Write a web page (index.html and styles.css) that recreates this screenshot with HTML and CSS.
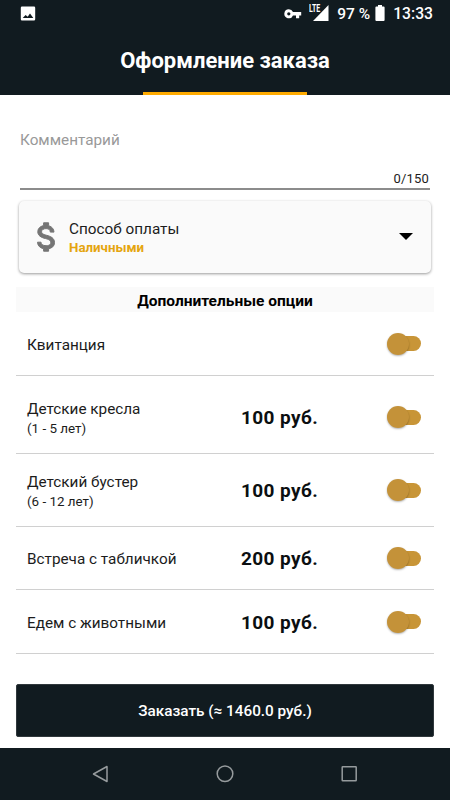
FILE: index.html
```html
<!DOCTYPE html>
<html lang="ru">
  <head>
    <meta charset="UTF-8" />
    <meta name="viewport" content="width=device-width, initial-scale=1.0" />
    <title>Оформление заказа</title>
    <link rel="stylesheet" href="styles.css">
  </head>
  <body>
    <div class="header">
      <div class="status-bar">
        <svg class="icon-image" width="16" height="15" viewBox="0 0 16 15">
          <path fill="#fff" fill-rule="evenodd" d="M2 0.500h12a1.200 1.200 0 0 1 1.200 1.200v11.600a1.200 1.200 0 0 1-1.200 1.200H2a1.200 1.200 0 0 1-1.200-1.200V1.700A1.200 1.200 0 0 1 2 0.500zM2.700 12h10.600L10 7.600 7.700 10.700 5.600 9z"/>
        </svg>
        <div class="status-right">
          <svg class="icon-key" width="18" height="10" viewBox="0 0 18 10">
            <path fill="#fff" fill-rule="evenodd" d="M4.800 0.300a4.500 4.500 0 1 0 4.200 6.200h3v2.700h3.200V6.500h2V3.100H9A4.500 4.500 0 0 0 4.800 0.300zM4.800 3.200a1.650 1.650 0 1 1 0 3.300 1.650 1.650 0 0 1 0-3.300z"/>
          </svg>
          <div class="signal">
            <svg width="16" height="16" viewBox="0 0 16 16"><path fill="#fff" d="M15.500 0v16H0z"/></svg>
            <span class="lte">LTE</span>
          </div>
          <span class="battery-text">97 %</span>
          <svg class="icon-battery" width="10" height="16" viewBox="0 0 10 16">
            <path fill="#fff" d="M3 0h4v1.500h1.600a1 1 0 0 1 1 1V15a1 1 0 0 1-1 1H1.400a1 1 0 0 1-1-1V2.500a1 1 0 0 1 1-1H3z"/>
          </svg>
          <span class="time">13:33</span>
        </div>
      </div>
      <h1>Оформление заказа</h1>
      <div class="tab-line"></div>
    </div>

    <div class="content">
      <!-- Комментарий -->
      <div class="comment">
        <div class="comment-label">Комментарий</div>
        <div class="comment-count">0/150</div>
      </div>

      <!-- Способ оплаты -->
      <div class="payment">
        <svg class="icon-dollar" width="18" height="30" viewBox="0 0 18 30">
          <path fill="#757575" stroke="#757575" stroke-width="1" d="M9.600 13.300c-3.800-1-5-2-5-3.600 0-1.800 1.700-3.100 4.500-3.100 3 0 4.100 1.400 4.200 3.500H17c-.1-2.900-1.900-5.500-5.400-6.400V0.800H6.600v2.800C3.400 4.300.8 6.400.8 9.700c0 3.900 3.200 5.800 7.900 6.900 4.200 1 5 2.500 5 4.100 0 1.200-.8 3-4.600 3-3.500 0-4.900-1.500-5.100-3.500H.5c.2 3.700 2.800 5.800 6.100 6.500V29.200h5v-2.500c3.300-.6 5.900-2.500 5.900-6 0-4.800-4.100-6.400-7.900-7.400z"/>
        </svg>
        <div class="payment-text">
          <div class="payment-title">Способ оплаты</div>
          <div class="payment-value">Наличными</div>
        </div>
        <svg class="icon-arrow" width="14" height="7" viewBox="0 0 14 7"><path d="M0 0h14L7 7z"/></svg>
      </div>

      <!-- Дополнительные опции -->
      <h2>Дополнительные опции</h2>
      <div class="option">
        <div class="option-name">Квитанция</div>
        <div class="option-price"></div>
        <div class="switch"></div>
      </div>
      <div class="option option-tall">
        <div class="option-name">Детские кресла<small>(1 - 5 лет)</small></div>
        <div class="option-price">100 руб.</div>
        <div class="switch"></div>
      </div>
      <div class="option option-medium">
        <div class="option-name">Детский бустер<small>(6 - 12 лет)</small></div>
        <div class="option-price">100 руб.</div>
        <div class="switch"></div>
      </div>
      <div class="option option-short">
        <div class="option-name">Встреча с табличкой</div>
        <div class="option-price">200 руб.</div>
        <div class="switch"></div>
      </div>
      <div class="option">
        <div class="option-name">Едем с животными</div>
        <div class="option-price">100 руб.</div>
        <div class="switch"></div>
      </div>

      <button class="order-btn">Заказать (≈ 1460.0 руб.)</button>
    </div>

    <div class="nav-bar">
      <svg width="18" height="18" viewBox="0 0 18 18"><path d="M16 1.500v15L2.500 9z"/></svg>
      <svg width="18" height="18" viewBox="0 0 18 18"><circle cx="9" cy="8.700" r="7.800"/></svg>
      <svg width="18" height="18" viewBox="0 0 18 18"><rect x="1.200" y="1.700" width="14" height="14" rx="0.500"/></svg>
    </div>
  </body>
</html>
```
FILE: styles.css
```css
* {
  margin: 0;
  padding: 0;
  box-sizing: border-box;
}

body {
  background: #fff;
  font-family: Roboto, "Noto Sans", sans-serif;
  height: 800px;
  color: #1c1c1c;
  display: flex;
  flex-direction: column;
  overflow: hidden;
}

.header {
  background: #111b20;
  height: 95px;
  display: flex;
  flex-direction: column;
  color: #fff;
}

.status-bar {
  height: 28px;
  padding: 0 17px 0 20px;
  display: flex;
  align-items: center;
  justify-content: space-between;
  font-size: 16px;
  font-weight: 500;
  line-height: 28px;
}

.icon-image {
  margin-top: -2px;
}

.status-right {
  display: flex;
  align-items: center;
}

.icon-key {
  margin-right: 6px;
}

.signal {
  position: relative;
  width: 21px;
  height: 16px;
  display: flex;
  justify-content: flex-end;
  margin-top: -2px;
  margin-right: 8px;
}

.lte {
  position: absolute;
  left: 1px;
  top: 0;
  font-size: 10px;
  line-height: 8px;
  font-weight: 700;
  transform: scaleX(0.7);
  transform-origin: left;
}

.battery-text {
  font-size: 15.5px;
}

.icon-battery {
  margin: -2px 8px 0 5px;
}

.time {
  font-size: 15.7px;
}

.header h1 {
  height: 64px;
  font-size: 22px;
  line-height: 65px;
  font-weight: 700;
  text-align: center;
}

.tab-line {
  width: 164px;
  height: 3px;
  margin: 0 auto;
  background: #ffab00;
}

.content {
  flex: 1;
  padding: 33px 16px 0;
}

.comment {
  height: 62px;
  margin: 0 4px 11px;
  border-bottom: 2px solid #8c8c8c;
}

.comment-label {
  height: 41px;
  font-size: 15.3px;
  line-height: 25px;
  color: #999;
}

.comment-count {
  font-size: 13px;
  line-height: 19px;
  letter-spacing: 0.2px;
  text-align: right;
  padding-right: 1px;
}

.payment {
  height: 72px;
  margin: 0 3px 14px;
  padding: 0 18px;
  display: flex;
  align-items: center;
  background: #fafafa;
  border-radius: 5px;
  box-shadow: 0 1px 3px rgba(0, 0, 0, 0.4);
}

.payment-text {
  flex: 1;
  margin-left: 14px;
  padding-top: 2px;
}

.payment-title {
  font-size: 15.3px;
  line-height: 20px;
}

.payment-value {
  font-size: 13.3px;
  line-height: 18px;
  font-weight: 700;
  color: #e5a50f;
}

.icon-arrow {
  margin-top: -1px;
}

h2 {
  height: 25px;
  font-size: 15.5px;
  line-height: 28px;
  font-weight: 700;
  text-align: center;
  color: #000;
  background: #fafafa;
}

.option {
  height: 64px;
  padding: 0 13px 0 11px;
  display: grid;
  grid-template-columns: 214px 1fr 34px;
  align-items: center;
  border-bottom: 1px solid #d0d0d0;
}

.option-tall {
  height: 78px;
  padding-top: 5px;
}

.option-medium {
  height: 73px;
}

.option-short {
  height: 63px;
}

.option-name {
  font-size: 15.3px;
  line-height: 20px;
  padding-top: 2px;
}

.option-name small {
  display: block;
  font-size: 13.4px;
  line-height: 19px;
}

.option-price {
  font-size: 19px;
  line-height: 24px;
  letter-spacing: 0.4px;
  font-weight: 700;
  color: #0b0f11;
  padding-top: 2px;
}

.switch {
  width: 34px;
  height: 22px;
  display: flex;
  align-items: center;
}

.switch::before {
  content: '';
  width: 22px;
  height: 22px;
  border-radius: 50%;
  background: #c49239;
  box-shadow: 0 1px 2px rgba(0, 0, 0, 0.3);
  z-index: 1;
}

.switch::after {
  content: '';
  width: 24px;
  height: 15px;
  margin-left: -12px;
  border-radius: 8px;
  background: #c89537;
}

.order-btn {
  display: block;
  width: 100%;
  height: 53px;
  padding-top: 1px;
  margin-top: 30px;
  border: 1px solid #30383c;
  border-radius: 2px;
  background: #111b20;
  color: #fff;
  font-family: inherit;
  font-size: 15.3px;
  font-weight: 500;
}

.nav-bar {
  height: 52px;
  padding: 0 91px;
  display: flex;
  align-items: center;
  justify-content: space-between;
  background: #111b20;
}

.nav-bar svg {
  fill: none;
  stroke: #969b9d;
  stroke-width: 1.5;
  stroke-linejoin: round;
}
```
